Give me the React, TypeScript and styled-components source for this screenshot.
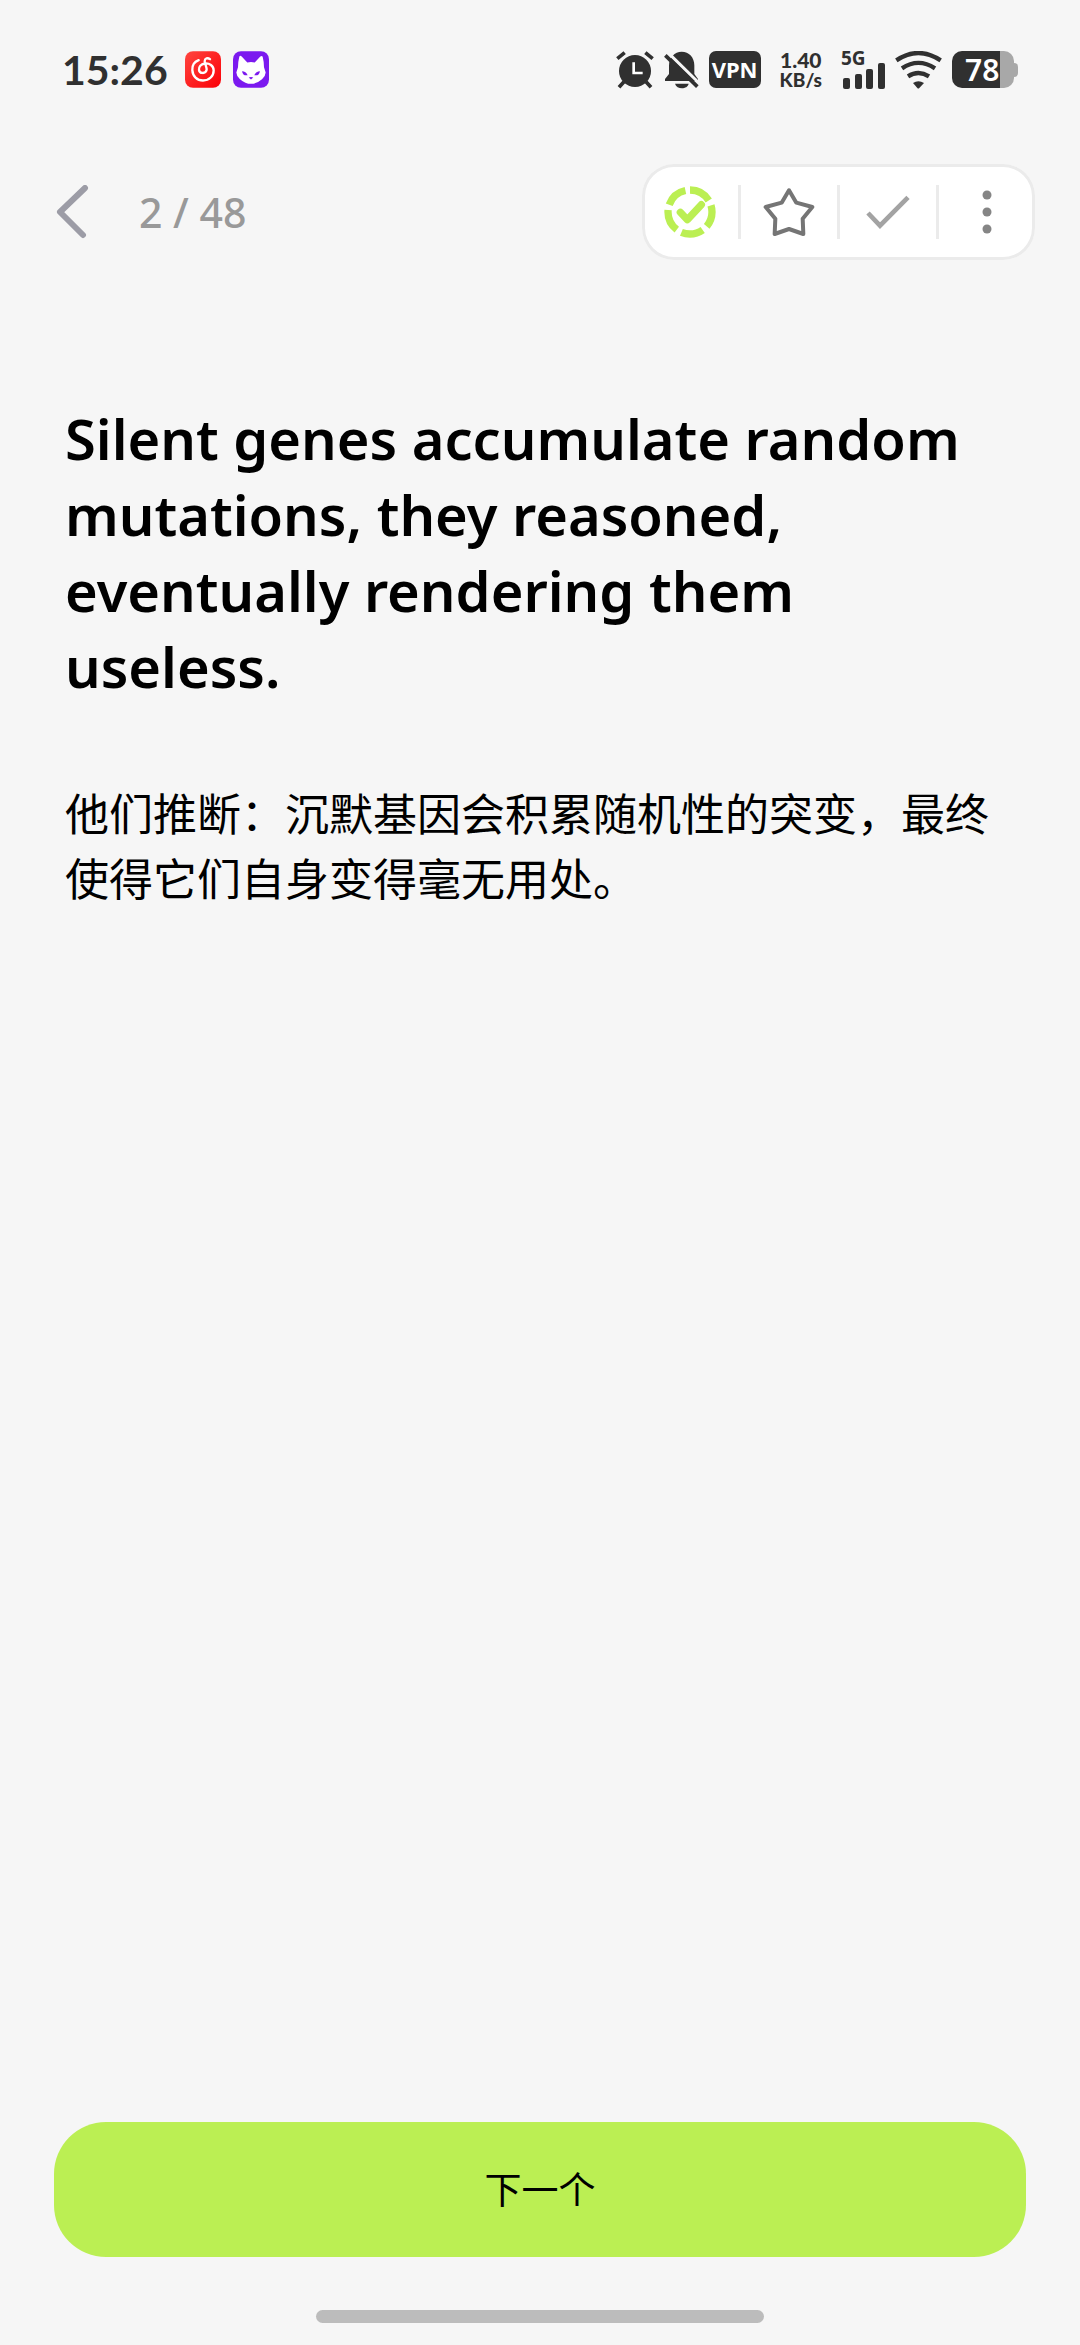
import React from "react";
import styled, { createGlobalStyle } from "styled-components";

const GlobalStyle = createGlobalStyle`
  * {
    box-sizing: border-box;
  }
  body {
    margin: 0;
    background: #f6f6f6;
    color: #000;
    font-family: "Noto Sans", "Noto Sans CJK SC", sans-serif;
  }
  button {
    border: 0;
    padding: 0;
    background: none;
    color: inherit;
    font-family: inherit;
    cursor: pointer;
  }
  svg {
    display: block;
    flex-shrink: 0;
  }
`;

const Screen = styled.div`
  display: flex;
  flex-direction: column;
  min-height: 100vh;
`;

const StatusBar = styled.div`
  display: flex;
  justify-content: space-between;
  align-items: center;
  height: 139px;
  padding: 0 62px;
  color: #303030;
`;

const StatusGroup = styled.div<{ $gap: number }>`
  display: flex;
  align-items: center;
  gap: ${({ $gap }) => $gap}px;
`;

const Clock = styled.time`
  margin-right: 5px;
  font-family: Lato, sans-serif;
  font-size: 41px;
  font-weight: 700;
  line-height: 48px;
`;

const VpnBadge = styled.span`
  width: 52px;
  height: 37px;
  border-radius: 7px;
  background: #303030;
  color: #fff;
  font-size: 22px;
  font-weight: 700;
  line-height: 37px;
  text-align: center;
`;

const Speed = styled.div`
  display: flex;
  flex-direction: column;
  align-items: center;
  padding: 0 9px;
  font-family: Lato, sans-serif;
  font-size: 21px;
  font-weight: 900;
  line-height: 20px;
`;

const SpeedUnit = styled.span`
  font-size: 19px;
  line-height: 20px;
`;

const Battery = styled.div`
  display: flex;
  align-items: center;
  &::after {
    content: "";
    width: 4px;
    height: 14px;
    border-radius: 0 4px 4px 0;
    background: #a8a8a8;
  }
`;

const BatteryLevel = styled.div<{ $level: number }>`
  width: 62px;
  height: 37px;
  padding-left: 13px;
  border-radius: 10px;
  background: linear-gradient(
    to right,
    #303030 ${({ $level }) => $level}%,
    #a8a8a8 ${({ $level }) => $level}%
  );
  color: #fff;
  font-size: 30px;
  font-weight: 600;
  line-height: 37px;
`;

const Header = styled.header`
  display: flex;
  justify-content: space-between;
  align-items: center;
  padding: 25px 45px 0 55px;
`;

const Progress = styled.div`
  display: flex;
  align-items: center;
  gap: 48px;
  color: #999;
  font-size: 41px;
  font-weight: 500;
  line-height: 56px;
`;

const Toolbar = styled.div`
  display: flex;
  align-items: center;
  height: 96px;
  border-radius: 32px;
  background: #fff;
  box-shadow: inset 0 0 0 3px #ebebeb;
`;

const ToolButton = styled.button`
  display: flex;
  align-items: center;
  justify-content: center;
  width: 96px;
  height: 96px;
`;

const Divider = styled.span`
  width: 3px;
  height: 54px;
  background: #ebebeb;
`;

const Content = styled.main`
  flex: 1;
  padding: 140px 80px 0 65px;
`;

const Sentence = styled.h1`
  margin: 0 0 76px;
  font-size: 56px;
  font-weight: 600;
  line-height: 76px;
`;

const Translation = styled.p`
  margin: 0;
  font-family: "Noto Sans CJK SC", sans-serif;
  font-size: 44px;
  font-weight: 400;
  line-height: 65px;
`;

const Footer = styled.footer`
  display: flex;
  flex-direction: column;
  align-items: center;
  gap: 53px;
  padding: 0 54px 22px;
`;

const NextButton = styled.button`
  width: 100%;
  height: 135px;
  padding-bottom: 3px;
  border-radius: 52px;
  background: #bbef53;
  font-family: "Noto Sans CJK SC", sans-serif;
  font-size: 37px;
  line-height: 56px;
`;

const HomeIndicator = styled.div`
  width: 46%;
  height: 13px;
  border-radius: 7px;
  background: #bcbcbc;
`;

const MusicAppIcon = () => (
  <svg width="36" height="37" viewBox="435 64 108 110">
    <defs>
      <linearGradient id="music" x1="0" y1="0" x2="1" y2="1">
        <stop offset="0" stopColor="#ff453f" />
        <stop offset="1" stopColor="#fb0007" />
      </linearGradient>
    </defs>
    <rect x="435" y="64" width="108" height="110" rx="24" fill="url(#music)" />
    <path
      d="M476 91C463 96 456 107 457 121C458 139 471 152 489 152C508 152 521 138 521 122C521 108 508 99 494 101C483 103 476 111 477 120C478 132 497 133 500 120C501 113 494 101 494 94C494 85 503 83 510 88"
      fill="none"
      stroke="#fff"
      strokeWidth="7"
      strokeLinecap="round"
    />
  </svg>
);

const CatAppIcon = () => (
  <svg width="36" height="37" viewBox="581 64 108 110">
    <rect x="581" y="64" width="108" height="110" rx="24" fill="#7b19ef" />
    <path
      d="M600 80Q603 76 607 80L624 98Q635 95 646 98L663 80Q668 76 670 81Q674 97 674 112L679 128Q679 138 668 148Q652 162 635 162Q618 162 602 148Q591 138 591 128L596 112Q596 96 600 80Z"
      fill="#fff"
    />
    <path
      d="M608 124Q620 124 625 136Q611 139 608 124ZM662 124Q650 124 645 136Q659 139 662 124ZM628 143Q635 140 642 143L635 149Z"
      fill="#7b19ef"
    />
  </svg>
);

const AlarmIcon = () => (
  <svg width="38" height="38" viewBox="46 61 114 114">
    <g fill="none" stroke="#303030" strokeWidth="11">
      <path d="M50 84L72 66M134 66L156 84" />
      <path d="M70 153L55 170M136 153L151 170" />
    </g>
    <circle cx="103" cy="121" r="48" fill="#303030" />
    <path d="M99 95V127H126" fill="none" stroke="#fff" strokeWidth="8" />
  </svg>
);

const MutedIcon = () => (
  <svg width="35" height="38" viewBox="193 61 105 114">
    <path
      d="M196 151V145L208 130V105C208 80 225 63 246 63C268 63 284 80 284 104V130L295 145V151Z"
      fill="#303030"
    />
    <path d="M226 159H267C263 177 231 177 226 159Z" fill="#303030" />
    <path d="M205 66L301 160" stroke="#f6f6f6" strokeWidth="9" />
    <path d="M197 74L293 168" stroke="#303030" strokeWidth="11" />
  </svg>
);

const SignalIcon = () => (
  <svg width="44" height="52" viewBox="0 -7 44 52" fill="#303030">
    <text x="0" y="14" fontSize="19" fontWeight="700">
      5G
    </text>
    <rect x="2" y="27" width="7" height="11" rx="2" />
    <rect x="14" y="23" width="7" height="15" rx="2" />
    <rect x="25" y="18" width="7" height="20" rx="2" />
    <rect x="37" y="12" width="7" height="26" rx="2" />
  </svg>
);

const WifiIcon = () => (
  <svg width="47" height="38" viewBox="226 59 141 114">
    <g fill="none" stroke="#303030" strokeWidth="13">
      <path d="M230 87Q296 43 363 87" />
      <path d="M247 111Q296 78 346 111" />
      <path d="M265 135Q296 115 328 135" />
    </g>
    <path d="M280 155Q296 144 313 155L299 170Q296 173 293 170Z" fill="#303030" />
  </svg>
);

const BackIcon = () => (
  <svg width="36" height="54" viewBox="0 0 36 54">
    <path
      d="M30 3L5 27L28 50"
      fill="none"
      stroke="#9c9ca6"
      strokeWidth="6"
      strokeLinecap="round"
      strokeLinejoin="round"
    />
  </svg>
);

const StudyIcon = () => (
  <svg width="52" height="52" viewBox="101 107 156 156" fill="none" stroke="#bbef53" strokeWidth="22">
    <circle
      cx="179"
      cy="185"
      r="66"
      pathLength="360"
      strokeDasharray="58 14"
      transform="rotate(-90 179 185)"
    />
    <path d="M150 186L171 208L213 163" strokeLinecap="round" strokeLinejoin="round" />
  </svg>
);

const StarIcon = () => (
  <svg width="52" height="50" viewBox="399 110 156 150">
    <path
      d="M477 120L499 157L547 170L518 205L520 251L477 236L434 251L436 205L407 170L455 157Z"
      fill="none"
      stroke="#757575"
      strokeWidth="12"
      strokeLinejoin="round"
    />
  </svg>
);

const CheckIcon = () => (
  <svg width="44" height="34" viewBox="111 136 132 102">
    <path d="M117 190L153 228L237 143" fill="none" stroke="#a3a3a3" strokeWidth="14" />
  </svg>
);

const MoreIcon = () => (
  <svg width="10" height="44" viewBox="0 0 10 44" fill="#858585">
    <circle cx="5" cy="5" r="4.5" />
    <circle cx="5" cy="22" r="4.5" />
    <circle cx="5" cy="39" r="4.5" />
  </svg>
);

const App: React.FC = () => {
  return (
    <Screen>
      <GlobalStyle />
      <StatusBar>
        <StatusGroup $gap={12}>
          <Clock>15:26</Clock>
          <MusicAppIcon />
          <CatAppIcon />
        </StatusGroup>
        <StatusGroup $gap={10}>
          <AlarmIcon />
          <MutedIcon />
          <VpnBadge>VPN</VpnBadge>
          <Speed>
            <span>1.40</span>
            <SpeedUnit>KB/s</SpeedUnit>
          </Speed>
          <SignalIcon />
          <WifiIcon />
          <Battery>
            <BatteryLevel $level={78}>78</BatteryLevel>
          </Battery>
        </StatusGroup>
      </StatusBar>
      <Header>
        <Progress>
          <button aria-label="返回">
            <BackIcon />
          </button>
          <span>2 / 48</span>
        </Progress>
        <Toolbar>
          <ToolButton aria-label="学习">
            <StudyIcon />
          </ToolButton>
          <Divider />
          <ToolButton aria-label="收藏">
            <StarIcon />
          </ToolButton>
          <Divider />
          <ToolButton aria-label="完成">
            <CheckIcon />
          </ToolButton>
          <Divider />
          <ToolButton aria-label="更多">
            <MoreIcon />
          </ToolButton>
        </Toolbar>
      </Header>
      <Content>
        <Sentence>
          Silent genes accumulate random mutations, they reasoned, eventually rendering them useless.
        </Sentence>
        <Translation lang="zh-CN">
          他们推断：沉默基因会积累随机性的突变，最终使得它们自身变得毫无用处。
        </Translation>
      </Content>
      <Footer>
        <NextButton>下一个</NextButton>
        <HomeIndicator />
      </Footer>
    </Screen>
  );
};

export default App;
